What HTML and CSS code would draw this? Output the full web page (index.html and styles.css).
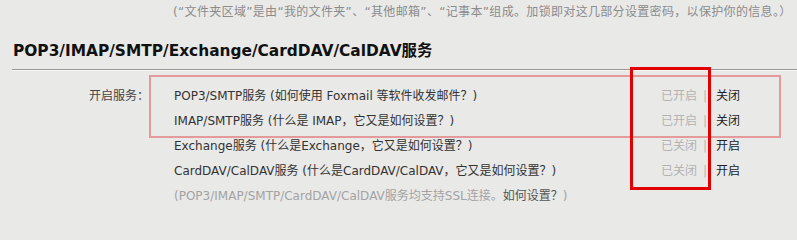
FILE: index.html
```html
<!DOCTYPE html>
<html lang="zh-CN">
<head>
<meta charset="utf-8">
<title>POP3/IMAP/SMTP/Exchange/CardDAV/CalDAV服务</title>
<link rel="stylesheet" href="styles.css">
</head>
<body>
<div class="page">
  <p class="intro">(“文件夹区域”是由“我的文件夹”、“其他邮箱”、“记事本”组成。加锁即对这几部分设置密码，以保护你的信息。）</p>

  <h2 class="title">POP3/IMAP/SMTP/Exchange/CardDAV/CalDAV服务</h2>

  <div class="services">
    <div class="label">开启服务：</div>
    <div class="list">
      <div class="row">
        <div class="name">POP3/SMTP服务 <a class="help">(如何使用 Foxmail 等软件收发邮件？)</a></div>
        <div class="status">已开启<span class="sep">|</span></div>
        <a class="action">关闭</a>
      </div>
      <div class="row">
        <div class="name">IMAP/SMTP服务 <a class="help">(什么是 IMAP，它又是如何设置？)</a></div>
        <div class="status">已开启<span class="sep">|</span></div>
        <a class="action">关闭</a>
      </div>
      <div class="row">
        <div class="name">Exchange服务 <a class="help">(什么是Exchange，它又是如何设置？)</a></div>
        <div class="status">已关闭<span class="sep">|</span></div>
        <a class="action">开启</a>
      </div>
      <div class="row">
        <div class="name">CardDAV/CalDAV服务 <a class="help">(什么是CardDAV/CalDAV，它又是如何设置？)</a></div>
        <div class="status">已关闭<span class="sep">|</span></div>
        <a class="action">开启</a>
      </div>
      <div class="row note">(POP3/IMAP/SMTP/CardDAV/CalDAV服务均支持SSL连接。<a class="note-link">如何设置？</a>)</div>
    </div>
  </div>

  <div class="mark mark-pink"></div>
  <div class="mark mark-red"></div>
</div>
</body>
</html>
```

FILE: styles.css
```css
html, body {
  margin: 0;
  padding: 0;
  background: #e9e9e8;
}

body {
  font-family: "DejaVu Sans", "Noto Sans CJK SC", sans-serif;
  font-size: 12px;
  color: #333;
}

.page {
  position: relative;
  width: 797px;
  height: 214px;
  overflow: hidden;
}

.intro {
  margin: 0;
  padding: 4px 0 0 173px;
  line-height: 16px;
  color: #8c8c8c;
  letter-spacing: 0.33px;
  white-space: nowrap;
}

.title {
  margin: 21px 0 0 12px;
  padding: 0 0 8px 1px;
  font-size: 15.4px;
  font-weight: bold;
  line-height: 20px;
  color: #111;
  border-bottom: 1px solid #9a9a9a;
  box-shadow: 0 1px 0 #f6f6f6;
}

.services {
  display: flex;
  padding-top: 14px;
}

.label {
  width: 149px;
  box-sizing: border-box;
  text-align: right;
  line-height: 25px;
  color: #444;
}

.list {
  width: 632px;
}

.row {
  display: grid;
  grid-template-columns: 1fr auto 65px;
  align-items: center;
  height: 25px;
  line-height: 25px;
  padding-left: 25px;
  white-space: nowrap;
}

.name {
  color: #333;
}

.help {
  color: #333;
}

.status {
  color: #b3b3b3;
}

.sep {
  margin: 0 9px 0 6px;
  color: #b8b8b8;
}

.action {
  color: #222;
}

.note {
  display: block;
  color: #a3a3a3;
}

.note-link {
  color: #555;
}

.mark {
  position: absolute;
  box-sizing: border-box;
}

.mark-pink {
  left: 149px;
  top: 75px;
  width: 632px;
  height: 63px;
  border: 2px solid #e49a9a;
}

.mark-red {
  left: 630px;
  top: 67px;
  width: 81px;
  height: 123px;
  border: 3px solid #e30000;
}
```
